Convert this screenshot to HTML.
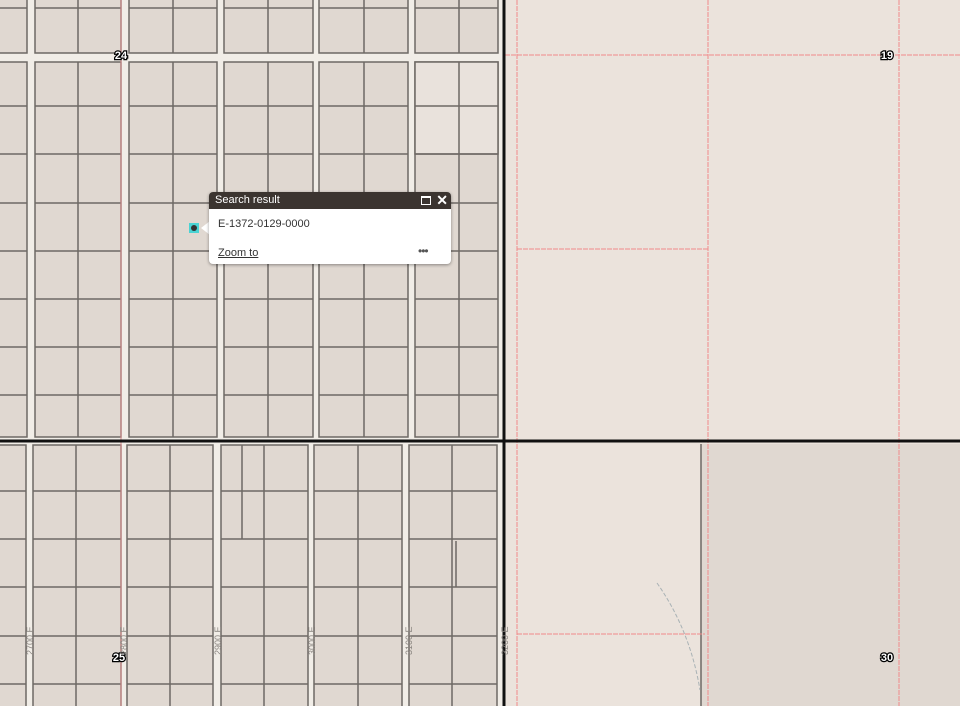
<!DOCTYPE html>
<html><head><style>
html,body{margin:0;padding:0;width:960px;height:706px;overflow:hidden;background:#ebe3dc;font-family:"Liberation Sans",sans-serif}
.pop{position:absolute;left:209px;top:192px;width:242px;height:72px;background:#fff;border-radius:4px;box-shadow:0 1px 3px rgba(0,0,0,.4);overflow:hidden}
.hd{height:17px;background:#3b3430;color:#fff;font-size:11px;line-height:17px;padding-left:6px;position:relative}
.bd{font-size:11px;color:#333;padding:9px 9px}
</style></head><body>
<svg width="960" height="706" style="position:absolute;left:0;top:0" xmlns="http://www.w3.org/2000/svg">
<rect x="0" y="0" width="505" height="706" fill="#f1ede7"/>
<g fill="#e0d8d1" stroke="#6e6965" stroke-width="1.5">
<rect x="-2" y="-5" width="29" height="58"/><rect x="35" y="-5" width="86" height="58"/><rect x="129" y="-5" width="88" height="58"/><rect x="224" y="-5" width="89" height="58"/><rect x="319" y="-5" width="89" height="58"/><rect x="415" y="-5" width="83" height="58"/>
<rect x="-2" y="62" width="29" height="375"/><rect x="35" y="62" width="86" height="375"/><rect x="129" y="62" width="88" height="375"/><rect x="224" y="62" width="89" height="375"/><rect x="319" y="62" width="89" height="375"/><rect x="415" y="62" width="83" height="375"/>
<rect x="-2" y="445" width="28" height="270"/><rect x="33" y="445" width="88" height="270"/><rect x="127" y="445" width="86" height="270"/><rect x="221" y="445" width="87" height="270"/><rect x="314" y="445" width="88" height="270"/><rect x="409" y="445" width="88" height="270"/>
</g>
<rect x="415" y="62" width="83" height="92" fill="#e9e2dc" stroke="#6e6965" stroke-width="1.5"/>
<g stroke="#6e6965" stroke-width="1.5">
<path d="M78 -5V53M173 -5V53M268 -5V53M364 -5V53M459 -5V53"/>
<path d="M0 8H27M35 8H121M129 8H217M224 8H313M319 8H408M415 8H498"/>
<path d="M78 62V437M173 62V437M268 62V437M364 62V437M459 62V437"/>
<path d="M0 106H27M35 106H121M129 106H217M224 106H313M319 106H408M415 106H498
M0 154H27M35 154H121M129 154H217M224 154H313M319 154H408M415 154H498
M0 203H27M35 203H121M129 203H217M224 203H313M319 203H408M415 203H498
M0 251H27M35 251H121M129 251H217M224 251H313M319 251H408M415 251H498
M0 299H27M35 299H121M129 299H217M224 299H313M319 299H408M415 299H498
M0 347H27M35 347H121M129 347H217M224 347H313M319 347H408M415 347H498
M0 395H27M35 395H121M129 395H217M224 395H313M319 395H408M415 395H498"/>
<path d="M76 445V706M170 445V706M264 445V706M358 445V706M452 445V706M242 445V539M456 541V587"/>
<path d="M0 491H26M33 491H121M127 491H213M221 491H308M314 491H402M409 491H497
M0 539H26M33 539H121M127 539H213M221 539H308M314 539H402M409 539H497
M0 587H26M33 587H121M127 587H213M221 587H308M314 587H402M409 587H497
M0 636H26M33 636H121M127 636H213M221 636H308M314 636H402M409 636H497
M0 684H26M33 684H121M127 684H213M221 684H308M314 684H402M409 684H497"/>
</g>
<path d="M121 0V706" stroke="#d88a8a" stroke-width="1"/>
<rect x="701" y="444" width="259" height="262" fill="#e0d8d1"/>
<path d="M701 444V706" stroke="#6e6965" stroke-width="1.5"/>
<g stroke="#f08a8a" stroke-width="1" stroke-dasharray="5 1">
<path d="M517 0V706M708 0V706M899 0V706M505 55H960M517 249H708M517 634H705"/>
</g>
<path d="M657 583Q690 630 700 690" stroke="#a9b2b5" stroke-width="1" fill="none" stroke-dasharray="4 2"/>
<path d="M0 441H960" stroke="#111" stroke-width="3"/>
<path d="M504 0V706" stroke="#111" stroke-width="3"/>
<g font-size="11" font-weight="bold" fill="#fff" stroke="#000" stroke-width="2.5" paint-order="stroke" font-family="Liberation Sans" text-anchor="middle">
<text x="121" y="59">24</text><text x="887" y="59">19</text><text x="119" y="661">25</text><text x="887" y="661">30</text>
</g>
<g font-size="9" fill="#8a8580" font-family="Liberation Sans">
<text transform="translate(33,655) rotate(-90)">2700 E</text>
<text transform="translate(127,655) rotate(-90)">2800 E</text>
<text transform="translate(221,655) rotate(-90)">2900 E</text>
<text transform="translate(315,655) rotate(-90)">3000 E</text>
<text transform="translate(412,655) rotate(-90)">3100 E</text>
<text transform="translate(508,655) rotate(-90)">3200 E</text>
</g>
<rect x="189" y="223" width="10" height="10" fill="#4ad3d3"/>
<circle cx="194" cy="228" r="3" fill="#333"/>
</svg>
<div style="position:absolute;left:201px;top:221px;width:0;height:0;border-top:7px solid transparent;border-bottom:7px solid transparent;border-right:9px solid #fff"></div>
<div class="pop">
<div class="hd">Search result
<span style="position:absolute;right:20px;top:4px;width:8px;height:6px;border:1px solid #fff;border-top-width:2px"></span>
<span style="position:absolute;right:3px;top:0;font-size:14px;font-weight:bold">✕</span></div>
<div class="bd">E-1372-0129-0000</div>
<div style="position:absolute;left:9px;top:55px;font-size:11px;color:#333;text-decoration:underline">Zoom to</div>
<div style="position:absolute;left:209px;top:52px;font-size:12px;color:#555;letter-spacing:-1px">•••</div>
</div>
</body></html>
